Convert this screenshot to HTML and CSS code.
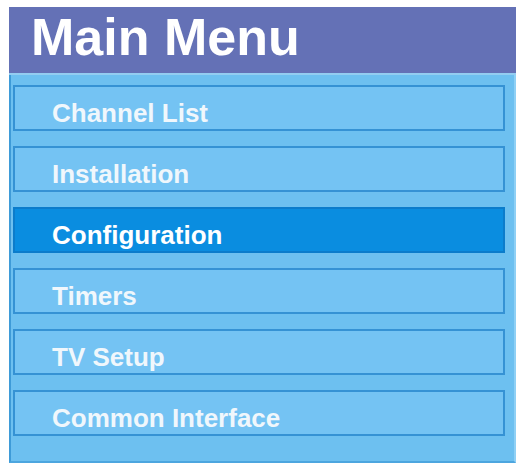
FILE: index.html
```html
<!DOCTYPE html>
<html>
<head>
<meta charset="utf-8">
<link rel="stylesheet" href="styles.css">
</head>
<body>
<div class="panel">
  <div class="header"><h1 class="title">Main Menu</h1></div>
  <ul class="menu">
    <li class="item">Channel List</li>
    <li class="item">Installation</li>
    <li class="item selected">Configuration</li>
    <li class="item">Timers</li>
    <li class="item">TV Setup</li>
    <li class="item">Common Interface</li>
  </ul>
</div>
</body>
</html>
```
FILE: styles.css
```css
html, body {
  margin: 0;
  padding: 0;
  background: #ffffff;
}
body {
  padding: 7px 2px 0 9px;
  font-family: "Liberation Sans", Arial, sans-serif;
}
.panel {
  width: 507px;
  box-sizing: border-box;
}
.header {
  height: 68px;
  box-sizing: border-box;
  background: #6471b6;
  border-bottom: 2px solid #93cdf1;
  padding-left: 22px;
}
.title {
  margin: 0;
  font-size: 52px;
  font-weight: bold;
  line-height: 60px;
  color: #ffffff;
}
.menu {
  list-style: none;
  margin: 0;
  height: 388px;
  box-sizing: border-box;
  padding: 10px 9px 0 2px;
  background: #6dc0f0;
  border-left: 2px solid #3e9bd8;
  border-right: 2px solid #8fd0f5;
  border-bottom: 2px solid #4da6df;
  display: flex;
  flex-direction: column;
  gap: 15px;
}
.item {
  height: 46px;
  box-sizing: border-box;
  border: 2px solid #3592d4;
  background: #74c3f3;
  color: #f0f7fc;
  font-size: 26px;
  font-weight: bold;
  line-height: 33px;
  padding: 10px 0 0 37px;
}
.item.selected {
  background: #0a8de0;
  border-color: #0b7ccb;
  color: #ffffff;
}
```
